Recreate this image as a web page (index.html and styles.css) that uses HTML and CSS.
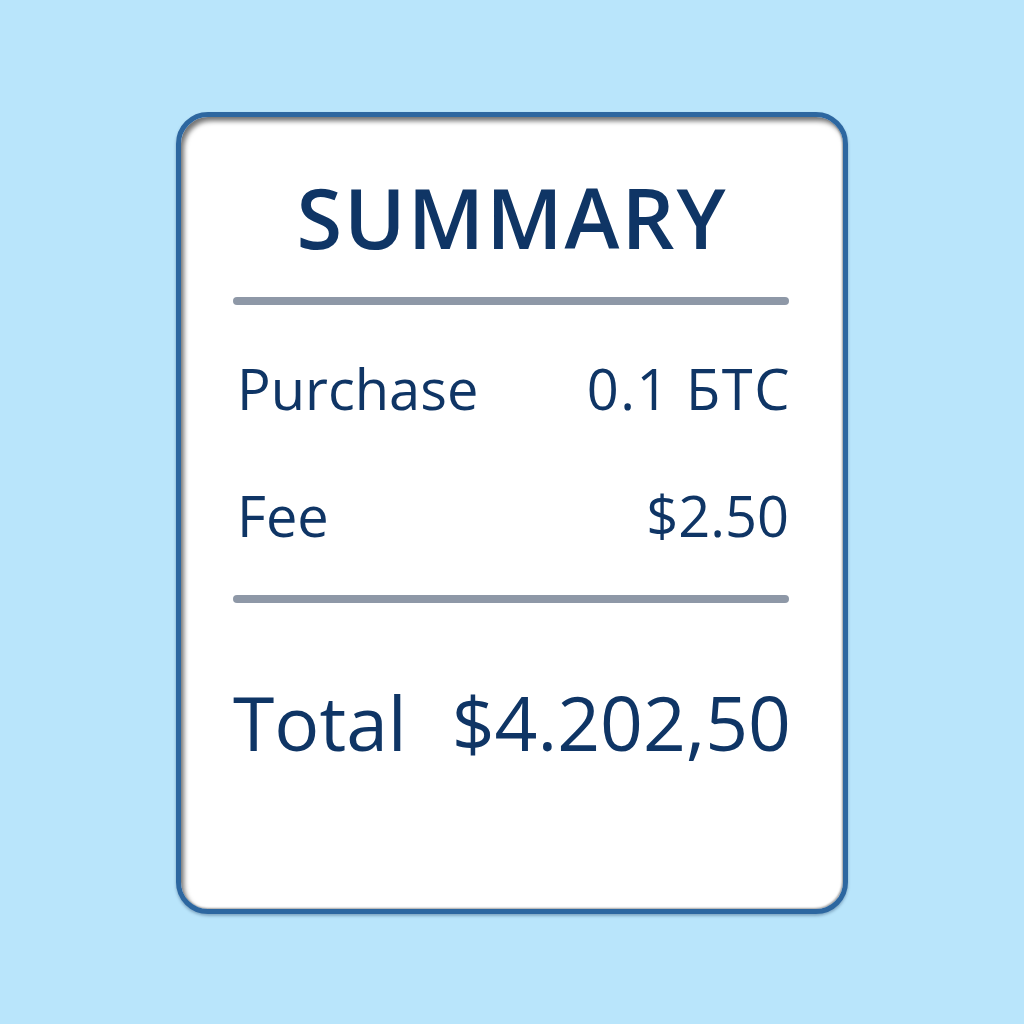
FILE: index.html
```html
<!DOCTYPE html>
<html lang="en">
<head>
<meta charset="utf-8">
<title>Summary</title>
<link rel="stylesheet" href="styles.css">
</head>
<body>
<div class="card">
  <h1 class="title">SUMMARY</h1>
  <div class="divider divider-top"></div>
  <div class="row row-purchase"><span class="label">Purchase</span><span class="value value-wide">0.1 БTC</span></div>
  <div class="row row-fee"><span class="label">Fee</span><span class="value">$2.50</span></div>
  <div class="divider divider-bottom"></div>
  <div class="row row-total"><span class="label">Total</span><span class="value">$4.202,50</span></div>
</div>
</body>
</html>
```

FILE: styles.css
```css
html, body {
  margin: 0;
  padding: 0;
}
body {
  background: #b9e5fb;
  font-family: "Open Sans", "DejaVu Sans", sans-serif;
  color: #0f3565;
  width: 1024px;
  height: 1024px;
  overflow: hidden;
}
.card {
  box-sizing: border-box;
  width: 672px;
  height: 802px;
  margin: 112px auto 0;
  background: #ffffff;
  border: 5px solid #2d67a0;
  border-radius: 32px;
  box-shadow: inset 3px 4px 5px rgba(0, 0, 0, 0.55), inset -1px -1px 2px rgba(0, 0, 0, 0.35), 0 2px 3px rgba(20, 50, 90, 0.35);
  padding: 58px 52px 0 52px;
  display: flex;
  flex-direction: column;
}
.title {
  margin: 0;
  font-size: 83px;
  line-height: 83px;
  font-weight: 600;
  text-align: center;
  letter-spacing: 2px;
}
.divider {
  height: 8px;
  border-radius: 4px;
  background: #8e98a7;
  margin-right: 2px;
}
.divider-top {
  margin-top: 39px;
}
.row {
  display: flex;
  justify-content: space-between;
  align-items: baseline;
}
.row-purchase, .row-fee {
  font-size: 56px;
  line-height: 56px;
  font-weight: 400;
}
.row-purchase {
  margin-top: 55px;
  padding-left: 4px;
}
.row-fee {
  margin-top: 71px;
  padding-left: 4px;
  padding-right: 2px;
}
.value-wide {
  letter-spacing: 1.5px;
}
.divider-bottom {
  margin-top: 52px;
}
.row-total {
  margin-top: 82px;
  font-size: 75px;
  line-height: 75px;
  font-weight: 400;
}
```
